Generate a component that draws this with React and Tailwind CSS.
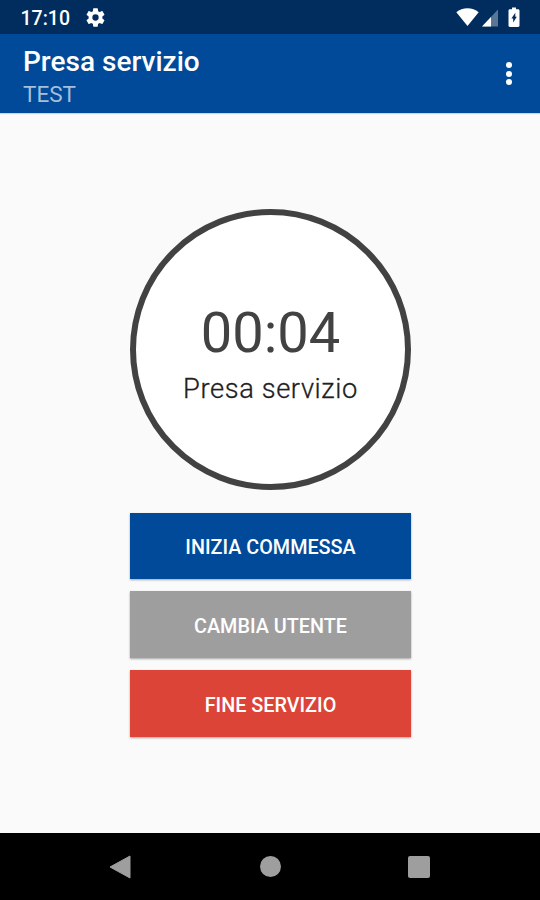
import React from 'react';

function StatusBar() {
  return (
    <div className="flex h-[34px] items-center bg-[#002d5e] pl-[20.5px] pr-5 text-white">
      <span className="w-[50.5px] pt-[3px] text-[19.5px] leading-none font-medium">17:10</span>
      <svg className="ml-[13px] h-[23px] w-[23px]" viewBox="0 0 24 24" fill="currentColor">
        <path d="M19.14 12.94c.04-.3.06-.61.06-.94 0-.32-.02-.64-.07-.94l2.03-1.58a.49.49 0 0 0 .12-.61l-1.92-3.32a.488.488 0 0 0-.59-.22l-2.39.96c-.5-.38-1.03-.7-1.62-.94l-.36-2.54a.484.484 0 0 0-.48-.41h-3.84c-.24 0-.43.17-.47.41l-.36 2.54c-.59.24-1.13.57-1.62.94l-2.39-.96c-.22-.08-.47 0-.59.22L2.74 8.87c-.12.21-.08.47.12.61l2.03 1.58c-.05.3-.09.63-.09.94s.02.64.07.94l-2.03 1.58a.49.49 0 0 0-.12.61l1.92 3.32c.12.22.37.29.59.22l2.39-.96c.5.38 1.03.7 1.62.94l.36 2.54c.05.24.24.41.48.41h3.84c.24 0 .44-.17.47-.41l.36-2.54c.59-.24 1.13-.56 1.62-.94l2.39.96c.22.08.47 0 .59-.22l1.92-3.32c.12-.22.07-.47-.12-.61l-2.01-1.58zM12 15.3a3.3 3.3 0 1 1 0-6.6 3.3 3.3 0 0 1 0 6.6z" />
      </svg>
      <svg className="ml-auto h-[34px] w-[23px]" viewBox="0 0 23 34" fill="currentColor">
        <path d="M11.5 26 0.3 12.2C3.5 9.6 7.3 8.2 11.5 8.2s8 1.4 11.2 4z" />
      </svg>
      <svg className="ml-[3px] h-[34px] w-4" viewBox="0 0 16 34" fill="currentColor">
        <path d="M0 26.5 16 9.5v17z" opacity=".35" />
        <path d="M0 26.5 9 17v9.5z" />
      </svg>
      <svg className="ml-[10px] h-[34px] w-3" viewBox="0 0 12 34">
        <path fill="white" d="M4 7.5h4v1.7h2.1c.8 0 1.4.6 1.4 1.3v15.1c0 .8-.6 1.4-1.4 1.4H1.9c-.8 0-1.4-.6-1.4-1.4V10.5c0-.7.6-1.3 1.4-1.3H4z" />
        <path fill="#002d5e" d="M7.3 12.7v4h1.5L5.2 22.5v-4H3.4z" />
      </svg>
    </div>
  );
}

function AppBar() {
  return (
    <header className="flex h-[79px] items-center justify-between bg-[#004a99] pl-[23px] pr-[28px] shadow-[0_1px_1px_rgba(0,0,0,0.15)]">
      <div className="flex flex-col pt-[7px]">
        <h1 className="text-[28px] leading-[33px] font-medium text-white">Presa servizio</h1>
        <p className="text-[22.5px] leading-[32px] text-[#a6bfdc]">TEST</p>
      </div>
      <button aria-label="Menu" className="flex flex-col gap-[2.5px]">
        <span className="h-[6px] w-[6px] rounded-full bg-white" />
        <span className="h-[6px] w-[6px] rounded-full bg-white" />
        <span className="h-[6px] w-[6px] rounded-full bg-white" />
      </button>
    </header>
  );
}

function ActionButton({ color, children }) {
  return (
    <button className={`flex w-[281px] items-center justify-center pt-[4px] text-[19.8px] font-medium text-white shadow-[0_1px_2px_rgba(0,0,0,0.35)] ${color}`}>
      {children}
    </button>
  );
}

function NavBar() {
  return (
    <nav className="flex h-[67px] items-center justify-between bg-black pl-[109px] pr-[110px] text-[#9e9e9e]">
      <svg className="h-6 w-[22px]" viewBox="0 0 22 24" fill="currentColor" stroke="currentColor" strokeLinejoin="round">
        <path d="M1 12 21 1v22z" />
      </svg>
      <span className="ml-px h-[21px] w-[21px] rounded-full bg-[#9e9e9e]" />
      <span className="h-[22px] w-[22px] rounded-[2px] bg-[#9e9e9e]" />
    </nav>
  );
}

export default function App() {
  return (
    <div className="flex h-[900px] w-[540px] flex-col overflow-hidden bg-[#fafafa] font-[Roboto,sans-serif]">
      <StatusBar />
      <AppBar />
      <main className="flex flex-1 flex-col items-center pt-[95.5px] pl-px">
        <div className="flex h-[281px] w-[281px] flex-col items-center rounded-full border-[6.5px] border-[#424242] bg-white pt-[85px]">
          <span className="text-[56px] leading-[66px] font-normal text-[#424242]">00:04</span>
          <span className="mt-[7px] text-[27.3px] leading-[32px] font-light tracking-[0.6px] text-[#202020] [-webkit-text-stroke:0.3px_#202020]">Presa servizio</span>
        </div>
        <div className="mt-[23.5px] flex flex-col gap-[12px]">
          <ActionButton color="h-[66px] bg-[#004a99]">INIZIA COMMESSA</ActionButton>
          <ActionButton color="h-[67px] bg-[#9e9e9e]">CAMBIA UTENTE</ActionButton>
          <ActionButton color="h-[67px] bg-[#db4437]">FINE SERVIZIO</ActionButton>
        </div>
      </main>
      <NavBar />
    </div>
  );
}
